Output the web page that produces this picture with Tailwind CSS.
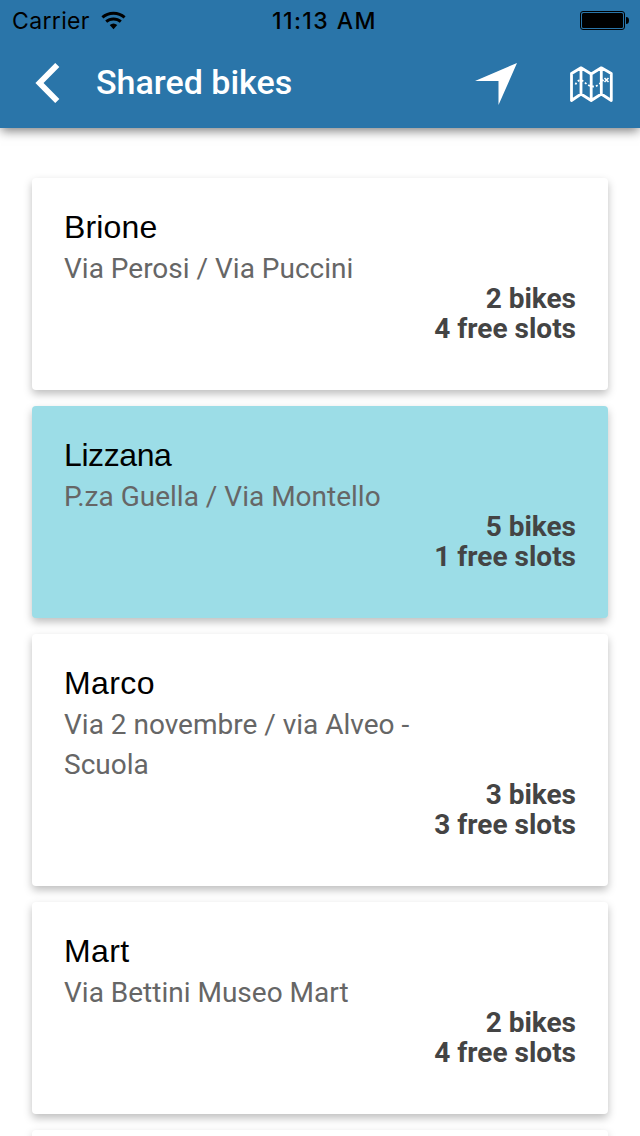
<!DOCTYPE html>
<html lang="en">
<head>
<meta charset="utf-8">
<title>Shared bikes</title>
<script src="https://cdn.jsdelivr.net/npm/@tailwindcss/browser@4"></script>
</head>
<body class="w-[640px] h-[1136px] overflow-hidden bg-white font-['Roboto',sans-serif]">
<header class="relative h-32 bg-[#2a75a9] shadow-[0_4px_10px_-1px_rgba(0,0,0,0.5)]">
  <div class="h-10 pt-px grid grid-cols-3 items-center pl-3 pr-[11px] font-['Inter',sans-serif] text-black">
    <div class="flex items-center gap-[11px]">
      <span class="text-[23px] leading-10 tracking-[0.35px]">Carrier</span>
      <svg class="-mt-0.5 w-[25px] h-[19px]" viewBox="0 0 25 19" fill="none" stroke="#000" stroke-width="2.9"><path d="M1.400 6.400a15.600 14 0 0 1 22.200 0M5.200 10.700a10.400 9.500 0 0 1 14.600 0"/><path d="M8.700 14a6 6 0 0 1 7.600 0L12.500 18.200z" fill="#000" stroke="none"/></svg>
    </div>
    <span class="pl-2 text-center text-[23px] leading-10 font-medium tracking-[1.45px] whitespace-nowrap">11:13 AM</span>
    <svg class="-mt-px justify-self-end w-[49px] h-[19px]" viewBox="0 0 49 19"><rect x=".5" y=".5" width="44" height="18" rx="2.5" fill="none" stroke="#000"/><rect x="2" y="2" width="41" height="15" rx="1.5"/><path d="M46 6c2 0 3 1 3 3.500S48 13 46 13z"/></svg>
  </div>
  <div class="h-[88px] flex items-start pl-[35px] pr-[26px] text-white">
    <svg class="mt-[23px] w-[25px] h-10" viewBox="0 0 25 40" fill="none" stroke="#fff" stroke-width="5.800"><path d="M22.300 2L4.500 20l17.800 18"/></svg>
    <h1 class="ml-9 mt-[22px] grow text-[34px] leading-10 font-medium">Shared bikes</h1>
    <svg class="mt-[23px] w-[42px] h-[42px]" viewBox="0 0 42 42" fill="#fff"><path d="M42 0L23.500 42V18H0z"/></svg>
    <svg class="ml-[52px] mt-[26px] w-[45px] h-[38px]" viewBox="0 0 45 38" fill="none" stroke="#fff" stroke-linejoin="round"><path stroke-width="2.800" d="M2.500 7.500L12 1.800l10.200 6.200L32.300 1.800l10 5.700v27l-10-6.500-10.100 6.500L12 28l-9.500 6.500zM12 1.800V28M22.200 8v26.500M32.300 1.800V28"/><path stroke-width="1.800" stroke-dasharray="2 2" d="M6.500 18.500c1.500-4 5-5.500 8-3s6 5 10 5 8-4 10-7"/><path stroke-width="1.600" d="M35.500 12l4 4m0-4l-4 4"/></svg>
  </div>
</header>
<main class="pt-[50px] px-8 flex flex-col gap-4">
  <section class="h-[212px] shrink-0 rounded-[4px] bg-white px-8 pt-[30px] shadow-[0_4px_8px_rgba(0,0,0,0.26)]">
    <h2 class="text-[32px] leading-[38px] text-black tracking-[0.15px] font-['Liberation_Sans',sans-serif]">Brione</h2>
    <p class="mt-[3px] w-[400px] text-[28px] leading-10 text-[#666]">Via Perosi / Via Puccini</p>
    <p class="-mt-[5px] text-right text-[28px] leading-[30px] font-bold text-[#444]">2 bikes<br>4 free slots</p>
  </section>
  <section class="h-[212px] shrink-0 rounded-[4px] bg-[#9cdde7] px-8 pt-[30px] shadow-[0_4px_8px_rgba(0,0,0,0.26)]">
    <h2 class="text-[32px] leading-[38px] text-black tracking-[-0.4px] font-['Liberation_Sans',sans-serif]">Lizzana</h2>
    <p class="mt-[3px] w-[400px] text-[28px] leading-10 text-[#666]">P.za Guella / Via Montello</p>
    <p class="-mt-[5px] text-right text-[28px] leading-[30px] font-bold text-[#444]">5 bikes<br>1 free slots</p>
  </section>
  <section class="h-[252px] shrink-0 rounded-[4px] bg-white px-8 pt-[30px] shadow-[0_4px_8px_rgba(0,0,0,0.26)]">
    <h2 class="text-[32px] leading-[38px] text-black tracking-[0.4px] font-['Liberation_Sans',sans-serif]">Marco</h2>
    <p class="mt-[3px] w-[400px] text-[28px] leading-10 text-[#666]">Via 2 novembre / via Alveo -<br>Scuola</p>
    <p class="-mt-[5px] text-right text-[28px] leading-[30px] font-bold text-[#444]">3 bikes<br>3 free slots</p>
  </section>
  <section class="h-[212px] shrink-0 rounded-[4px] bg-white px-8 pt-[30px] shadow-[0_4px_8px_rgba(0,0,0,0.26)]">
    <h2 class="text-[32px] leading-[38px] text-black tracking-[0.4px] font-['Liberation_Sans',sans-serif]">Mart</h2>
    <p class="mt-[3px] w-[400px] text-[28px] leading-10 text-[#666]">Via Bettini Museo Mart</p>
    <p class="-mt-[5px] text-right text-[28px] leading-[30px] font-bold text-[#444]">2 bikes<br>4 free slots</p>
  </section>
  <section class="h-[6px] shrink-0 rounded-t-[4px] bg-white shadow-[0_4px_8px_rgba(0,0,0,0.26)]"></section>
</main>
</body>
</html>
